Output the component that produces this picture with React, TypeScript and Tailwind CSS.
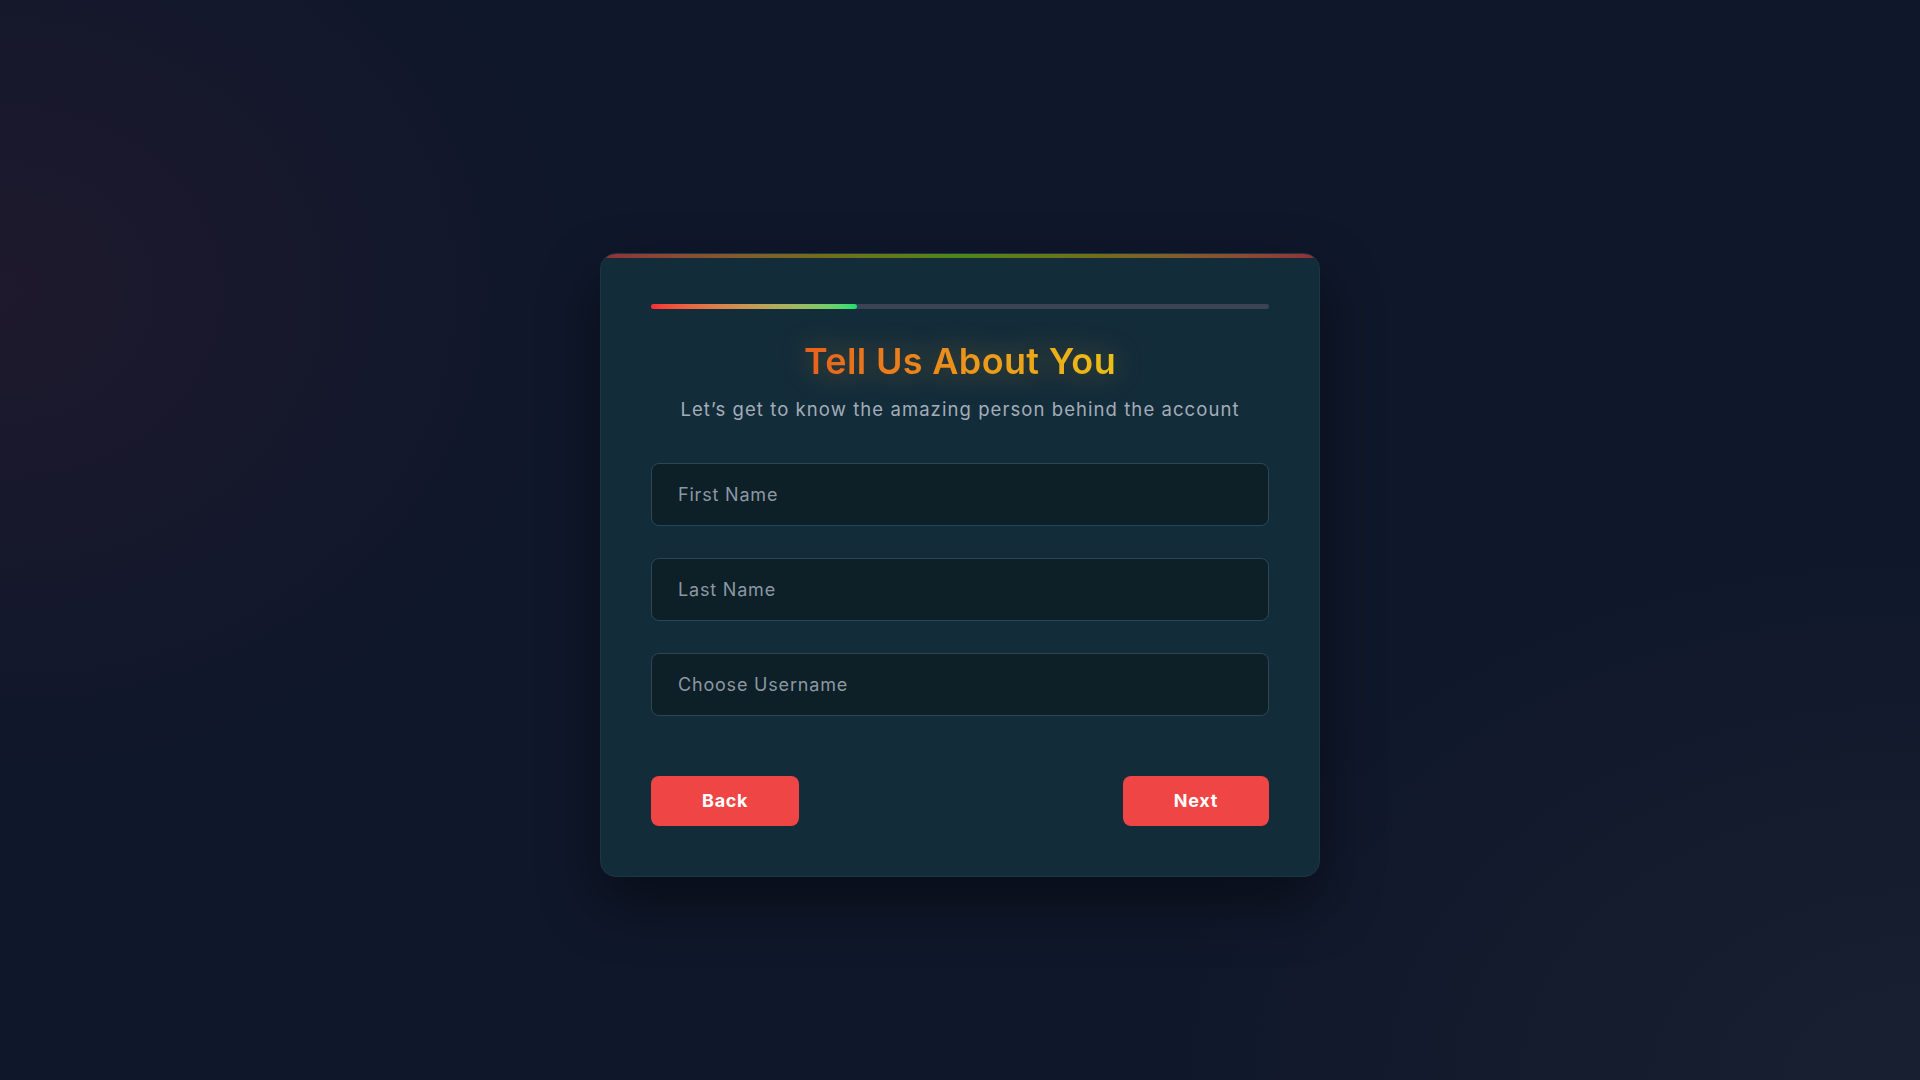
import { useState } from "react"

const font = { fontFamily: "Inter, 'Noto Sans', sans-serif" }

function Field({ placeholder }: { placeholder: string }) {
  const [value, setValue] = useState("")
  return (
    <input
      value={value}
      onChange={(e) => setValue(e.target.value)}
      placeholder={placeholder}
      className="w-full rounded-lg border border-[#2b4756] bg-[#0d1f27] px-[26px] py-[16.5px] text-lg leading-7 tracking-[0.045em] text-slate-200 placeholder:text-[#8b97a3] outline-none focus:border-[#3a5a6b]"
    />
  )
}

export default function App() {
  const [step] = useState(1)
  const total = 3

  return (
    <main
      style={font}
      className="flex min-h-screen items-center justify-center bg-[#0f172a] bg-[radial-gradient(ellipse_30%_45%_at_0%_27%,rgba(110,35,60,0.16),transparent),radial-gradient(ellipse_40%_50%_at_100%_100%,rgba(40,48,60,0.35),transparent)] pt-[50px]"
    >
      <div className="relative w-[720px] overflow-hidden rounded-2xl border border-[#1d3644] bg-[#132c3a] px-[50px] pt-[50px] pb-[50px] shadow-[0_25px_60px_rgba(0,0,0,0.45)]">
        <div className="absolute inset-x-0 top-0 h-1 bg-gradient-to-r from-red-500 via-lime-500 to-red-500 opacity-55" />

        <div className="h-[5px] w-full rounded-full bg-[#3a4454]">
          <div
            className="h-full rounded-full bg-gradient-to-r from-red-500 to-green-400"
            style={{ width: `${(step / total) * 100}%` }}
          />
        </div>

        <h1 className="mt-8 text-center text-4xl font-semibold tracking-[0.01em]">
          <span className="bg-gradient-to-r from-[#e8601c] to-[#eac016] bg-clip-text text-transparent drop-shadow-[0_0_14px_rgba(234,150,20,0.35)]">
            Tell Us About You
          </span>
        </h1>
        <p className="mt-3.5 text-center text-[18.5px] leading-7 tracking-[0.058em] text-[#a3adb8]">
          Let’s get to know the amazing person behind the account
        </p>

        <form className="mt-10 flex flex-col gap-8" onSubmit={(e) => e.preventDefault()}>
          <Field placeholder="First Name" />
          <Field placeholder="Last Name" />
          <Field placeholder="Choose Username" />

          <div className="mt-[28px] flex items-center justify-between">
            <button
              type="button"
              className="rounded-lg bg-[#f04545] px-[51px] py-[11px] text-lg leading-7 font-bold tracking-[0.04em] text-white hover:bg-red-600"
            >
              Back
            </button>
            <button
              type="submit"
              className="rounded-lg bg-[#f04545] px-[51px] py-[11px] text-lg leading-7 font-bold tracking-[0.04em] text-white hover:bg-red-600"
            >
              Next
            </button>
          </div>
        </form>
      </div>
    </main>
  )
}
